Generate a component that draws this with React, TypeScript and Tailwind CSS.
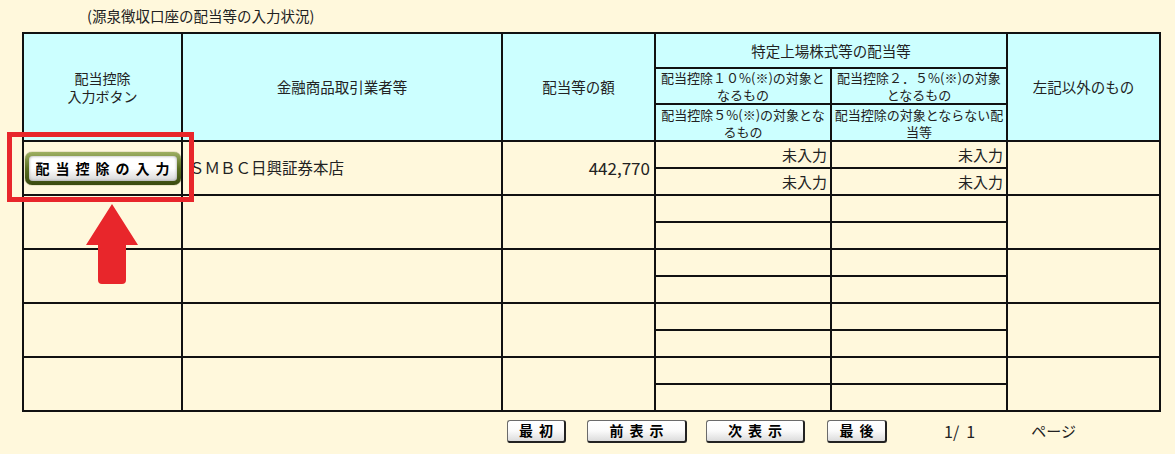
import React from 'react';

const jp = { fontFamily: '"Noto Sans CJK JP", "Noto Sans", sans-serif' };

const NavButton = ({ label, w }: { label: string; w: string }) => (
  <div
    className={`${w} h-[23px] flex items-center justify-center rounded-[3px] border border-[#6b6b6b] border-r-[2px] border-b-[2px] border-r-[#222] border-b-[#222] bg-gradient-to-b from-white via-[#fafafa] to-[#dcdcdc] text-[14px] font-bold text-black tracking-[6px] pl-[6px] whitespace-nowrap`}
  >
    {label}
  </div>
);

const App = () => {
  const th = 'border-2 border-[#111] bg-[#ccffff] font-normal text-[#222] text-center align-middle';
  const td = 'border-2 border-[#111] align-middle';

  return (
    <div className="relative w-[1175px] h-[454px] bg-[#fff8dc] overflow-hidden text-[#222]" style={jp}>
      <div className="pl-[87px] pt-[6px] h-[32px] text-[14.5px] leading-[20px]">(源泉徴収口座の配当等の入力状況)</div>

      <table className="ml-[22px] w-[1139px] table-fixed border-collapse">
        <colgroup>
          <col className="w-[159px]" />
          <col className="w-[320px]" />
          <col className="w-[153px]" />
          <col className="w-[176px]" />
          <col className="w-[176px]" />
          <col className="w-[153px]" />
        </colgroup>
        <thead>
          <tr className="h-[35px]">
            <th rowSpan={3} className={`${th} text-[14px] leading-[18px]`}>
              配当控除
              <br />
              入力ボタン
            </th>
            <th rowSpan={3} className={`${th} text-[14.5px]`}>金融商品取引業者等</th>
            <th rowSpan={3} className={`${th} text-[14.5px]`}>配当等の額</th>
            <th colSpan={2} className={`${th} text-[14.5px]`}>特定上場株式等の配当等</th>
            <th rowSpan={3} className={`${th} text-[14.5px]`}>左記以外のもの</th>
          </tr>
          <tr className="h-[36px]">
            <th className={`${th} text-[13px] leading-[17px] whitespace-nowrap`}>
              配当控除１０%(※)の対象と
              <br />
              なるもの
            </th>
            <th className={`${th} text-[13px] leading-[17px] whitespace-nowrap`}>
              配当控除２．５%(※)の対象
              <br />
              となるもの
            </th>
          </tr>
          <tr className="h-[37px]">
            <th className={`${th} text-[13px] leading-[17px] whitespace-nowrap`}>
              配当控除５%(※)の対象とな
              <br />
              るもの
            </th>
            <th className={`${th} text-[13px] leading-[17px] whitespace-nowrap`}>
              配当控除の対象とならない配
              <br />
              当等
            </th>
          </tr>
        </thead>
        <tbody className="text-[15px]">
          <tr className="h-[27px]">
            <td rowSpan={2} className={`${td} px-0`}>
              <div className="ml-[1px] w-[156px] h-[33px] rounded-[7px] p-[4px] bg-gradient-to-b from-[#9fb062] via-[#5b6f22] to-[#3a4a0e] shadow-[0_0_1px_#2a3508]">
                <div className="w-full h-full rounded-[4px] bg-gradient-to-b from-white via-white to-[#d6d6d6] shadow-[inset_0_0_3px_#9a9a9a] flex items-center justify-center text-[14px] font-bold text-black tracking-[6px] pl-[5px] whitespace-nowrap">
                  配当控除の入力
                </div>
              </div>
            </td>
            <td rowSpan={2} className={`${td} pl-[6px] whitespace-nowrap text-[15.5px]`}>ＳＭＢＣ日興証券本店</td>
            <td rowSpan={2} className={`${td} text-right pr-[4px] text-[17px]`}>442,770</td>
            <td className={`${td} text-right pr-[3px] leading-[20px]`}>未入力</td>
            <td className={`${td} text-right pr-[3px] leading-[20px]`}>未入力</td>
            <td rowSpan={2} className={td}></td>
          </tr>
          <tr className="h-[27px]">
            <td className={`${td} text-right pr-[3px] leading-[20px]`}>未入力</td>
            <td className={`${td} text-right pr-[3px] leading-[20px]`}>未入力</td>
          </tr>
          {[0, 1, 2, 3].map((i) => (
            <React.Fragment key={i}>
              <tr className="h-[27px]">
                <td rowSpan={2} className={td}></td>
                <td rowSpan={2} className={td}></td>
                <td rowSpan={2} className={td}></td>
                <td className={td}></td>
                <td className={td}></td>
                <td rowSpan={2} className={td}></td>
              </tr>
              <tr className="h-[27px]">
                <td className={td}></td>
                <td className={td}></td>
              </tr>
            </React.Fragment>
          ))}
        </tbody>
      </table>

      <div className="flex items-center mt-[7px] pl-[507px]">
        <NavButton label="最初" w="w-[59px]" />
        <div className="ml-[21px]">
          <NavButton label="前表示" w="w-[100px]" />
        </div>
        <div className="ml-[19px]">
          <NavButton label="次表示" w="w-[99px]" />
        </div>
        <div className="ml-[22px]">
          <NavButton label="最後" w="w-[60px]" />
        </div>
        <div className="ml-[57px] text-[16px] whitespace-pre">1/  1</div>
        <div className="ml-[56px] text-[15px]">ページ</div>
      </div>

      {/* red highlight box and arrow */}
      <div className="absolute left-[7px] top-[132px] w-[187px] h-[70px] border-[5px] border-[#e8262b]" />
      <svg className="absolute left-[86px] top-[204px]" width="52" height="80" viewBox="0 0 52 80">
        <path d="M26 0 L52 41 L40 41 L40 76 Q40 80 36 80 L16 80 Q12 80 12 76 L12 41 L0 41 Z" fill="#e8262b" />
      </svg>
    </div>
  );
};

export default App;
